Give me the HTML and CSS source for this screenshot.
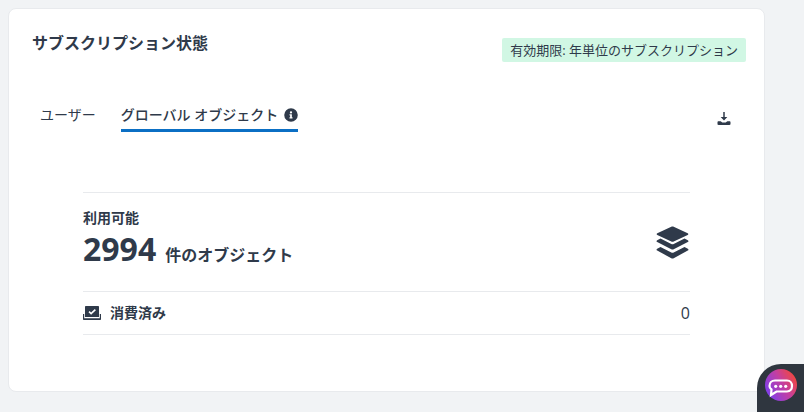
FILE: index.html
```html
<!DOCTYPE html>
<html lang="ja">
<head>
<meta charset="utf-8">
<title>サブスクリプション状態</title>
<link rel="stylesheet" href="styles.css">
</head>
<body>
<main class="card">
  <header class="card-head">
    <h2 class="title">サブスクリプション状態</h2>
    <span class="badge">有効期限: 年単位のサブスクリプション</span>
  </header>
  <div class="tabs">
    <div class="tab">ユーザー</div>
    <div class="tab tab-active">グローバル オブジェクト
      <svg class="info" viewBox="0 0 512 512"><path d="M256 8a248 248 0 1 0 0 496 248 248 0 0 0 0-496zm0 110a42 42 0 1 1 0 84 42 42 0 0 1 0-84zm56 254c0 7-5 12-12 12h-88c-7 0-12-5-12-12v-24c0-7 5-12 12-12h12v-64h-12c-7 0-12-5-12-12v-24c0-7 5-12 12-12h64c7 0 12 5 12 12v100h12c7 0 12 5 12 12z"/></svg>
    </div>
    <button class="download" type="button" aria-label="download">
      <svg viewBox="0 0 14 14"><path d="M6.200 0h1.600v5.500h2.800L7 9.200 3.400 5.500h2.800z"/><path d="M1 10h2.400L5.200 11.400h3.600L10.600 10H13c.5 0 1 .4 1 1v2c0 .5-.5 1-1 1H1c-.5 0-1-.5-1-1v-2c0-.6.5-1 1-1z"/></svg>
    </button>
  </div>
  <section class="panel">
    <div class="avail">
      <div class="avail-text">
        <div class="avail-label">利用可能</div>
        <div class="avail-count"><span class="num">2994</span><span class="unit">件のオブジェクト</span></div>
      </div>
      <svg class="layers" viewBox="0 0 33 33"><path d="M15.300.8c.8-.4 1.600-.4 2.400 0l14 6.500c.9.400.9 1.300 0 1.700l-14 6.500c-.8.400-1.600.4-2.400 0l-14-6.500c-.9-.4-.9-1.300 0-1.700z"/><path d="M4.500 12.500 1.200 14.200c-.9.500-.9 1.400 0 1.900L15.300 23.300c.8.400 1.600.4 2.400 0l14.100-7.200c.9-.5.900-1.400 0-1.900L28.500 12.500 17.700 18c-.8.400-1.600.4-2.400 0z"/><path d="M4.500 21 1.200 22.700c-.9.500-.9 1.400 0 1.900L15.300 32.200c.8.400 1.600.4 2.400 0l14.100-7.600c.9-.5.900-1.400 0-1.900L28.500 21 17.700 26.500c-.8.400-1.600.4-2.400 0z"/></svg>
    </div>
    <div class="consumed">
      <div class="consumed-label">
        <svg class="inbox" viewBox="0 0 18 14"><path d="M3 0h12c.6 0 1 .4 1 1v10H2V1c0-.6.4-1 1-1zm2.500 6.200 2.600 2.600 4.800-4.600-1.100-1.100-3.700 3.500-1.500-1.500z" fill-rule="evenodd"/><path d="M0 8h1.200v4.300h15.600V8H18v5c0 .6-.4 1-1 1H1c-.6 0-1-.4-1-1z"/></svg>
        <span>消費済み</span>
      </div>
      <span class="consumed-value">0</span>
    </div>
  </section>
</main>
<div class="chat">
  <span class="chat-circle">
    <svg viewBox="0 0 32 32"><path d="M10 11.500h12c3.300 0 5 2.500 5 5.500s-1.700 5.500-5 5.500H11.500L6 26l.5-5.500C5 19.400 4.500 18.500 4.500 17c0-3 2.200-5.500 5.500-5.500z" fill="none" stroke="#fff" stroke-width="2.200"/><circle cx="10.700" cy="17.300" r="1.600" fill="#fff"/><circle cx="15.700" cy="17.300" r="1.600" fill="#fff"/><circle cx="20.700" cy="17.300" r="1.600" fill="#fff"/></svg>
  </span>
</div>
</body>
</html>
```
FILE: styles.css
```css
* { box-sizing: border-box; }
html, body { height: 100%; }
body {
  margin: 0;
  padding: 8px 39px 0 8px;
  background: #f1f3f5;
  color: #2f3a4a;
  font-family: "Open Sans", "Noto Sans CJK JP", sans-serif;
  overflow: hidden;
}
.card {
  width: 757px;
  height: 384px;
  background: #fff;
  border: 1px solid #e8eaed;
  border-radius: 8px;
  padding: 0 18px 0 23px;
}
.card-head {
  display: flex;
  justify-content: space-between;
  align-items: flex-start;
  height: 87px;
}
.title {
  margin: 22px 0 0;
  font-size: 16px;
  line-height: 24px;
  font-weight: 700;
}
.badge {
  margin-top: 29px;
  height: 24px;
  padding: 0 8px;
  background: #d1f7e4;
  border-radius: 2px;
  font-size: 13px;
  line-height: 24px;
  white-space: nowrap;
}
.tabs {
  display: flex;
  align-items: flex-start;
  height: 96px;
  padding-left: 8px;
  font-size: 14px;
}
.tab {
  height: 36px;
  line-height: 20px;
  padding-top: 9px;
  margin-right: 25px;
  white-space: nowrap;
}
.tab-active {
  display: flex;
  align-items: flex-start;
  height: 36px;
  font-weight: 500;
  border-bottom: 3px solid #0b6fc4;
}
.info {
  width: 14px;
  height: 14px;
  margin: 3px 0 0 6px;
  fill: #2f3a4a;
}
.download {
  margin: 16px 15px 0 auto;
  padding: 0;
  width: 14px;
  height: 13px;
  border: 0;
  background: none;
}
.download svg {
  display: block;
  width: 14px;
  height: 13px;
  fill: #2f3a4a;
}
.panel {
  width: 607px;
  margin-left: 51px;
  font-size: 14px;
}
.avail {
  display: flex;
  justify-content: space-between;
  align-items: center;
  height: 100px;
  border-top: 1px solid #e8eaed;
  border-bottom: 1px solid #e8eaed;
}
.avail-text { margin-bottom: 8px; }
.avail-label {
  font-weight: 700;
  line-height: 20px;
}
.avail-count {
  display: flex;
  align-items: baseline;
  margin-top: 1px;
}
.num {
  font-size: 32px;
  line-height: 40px;
  font-weight: 700;
}
.unit {
  margin-left: 9px;
  font-size: 16px;
  font-weight: 700;
}
.layers {
  width: 33px;
  height: 33px;
  fill: #2f3a4a;
  margin-right: 1px;
}
.consumed {
  display: flex;
  justify-content: space-between;
  align-items: center;
  height: 43px;
  border-bottom: 1px solid #e8eaed;
}
.consumed-label {
  display: flex;
  align-items: center;
  gap: 9px;
  font-weight: 700;
  line-height: 18px;
}
.inbox {
  width: 18px;
  height: 14px;
  fill: #2f3a4a;
}
.consumed-value { font-size: 16px; }
.chat {
  position: fixed;
  right: 0;
  bottom: 0;
  width: 47px;
  height: 48px;
  padding: 5px 0 0 8px;
  background: #2f363f;
  border-top-left-radius: 24px;
}
.chat-circle {
  display: block;
  width: 32px;
  height: 32px;
  border-radius: 50%;
  background: linear-gradient(60deg, #7a3ff0 10%, #c43fa0 55%, #f4483a 90%);
}
.chat-circle svg {
  display: block;
  width: 32px;
  height: 32px;
}
```
